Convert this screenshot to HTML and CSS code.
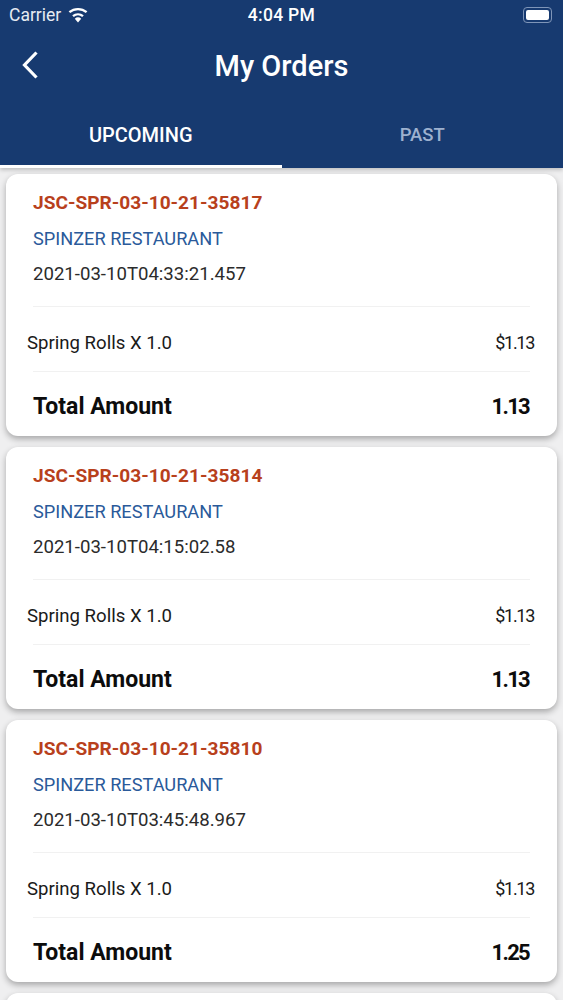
FILE: index.html
```html
<!DOCTYPE html>
<html lang="en">
<head>
    <meta charset="UTF-8">
    <meta name="viewport" content="width=device-width, initial-scale=1.0">
    <title>My Orders</title>
    <link rel="stylesheet" href="styles.css">
</head>
<body>

    <div class="header">
        <div class="status-bar">
            <div class="status-left">
                <span>Carrier</span>
                <svg class="wifi" width="20" height="16" viewBox="0 0 20 16">
                    <path d="M10 15.5l-3.2-3.7a4.8 4.8 0 0 1 6.4 0z" fill="#fff"/>
                    <path d="M5 9.2a7.8 7.8 0 0 1 10 0" fill="none" stroke="#fff" stroke-width="2.4"/>
                    <path d="M1.4 5.2a13.4 13.4 0 0 1 17.2 0" fill="none" stroke="#fff" stroke-width="2.4"/>
                </svg>
            </div>
            <div class="status-time">4:04 PM</div>
            <div class="battery"><div class="battery-fill"></div></div>
        </div>

        <div class="title-bar">
            <svg class="back" width="18" height="28" viewBox="0 0 18 28">
                <path d="M15.5 1.5L3.5 14l12 12.5" fill="none" stroke="#fff" stroke-width="3.2"/>
            </svg>
            <div class="title">My Orders</div>
        </div>

        <div class="tabs">
            <div class="tab active">UPCOMING</div>
            <div class="tab">PAST</div>
        </div>
    </div>

    <div class="orders">
        <div class="card">
            <div class="order-id">JSC-SPR-03-10-21-35817</div>
            <div class="restaurant">SPINZER RESTAURANT</div>
            <div class="date">2021-03-10T04:33:21.457</div>
            <div class="item-row"><span>Spring Rolls X 1.0</span><span class="price">$1.13</span></div>
            <div class="total-row"><span>Total Amount</span><span class="total">1.13</span></div>
        </div>

        <div class="card">
            <div class="order-id">JSC-SPR-03-10-21-35814</div>
            <div class="restaurant">SPINZER RESTAURANT</div>
            <div class="date">2021-03-10T04:15:02.58</div>
            <div class="item-row"><span>Spring Rolls X 1.0</span><span class="price">$1.13</span></div>
            <div class="total-row"><span>Total Amount</span><span class="total">1.13</span></div>
        </div>

        <div class="card">
            <div class="order-id">JSC-SPR-03-10-21-35810</div>
            <div class="restaurant">SPINZER RESTAURANT</div>
            <div class="date">2021-03-10T03:45:48.967</div>
            <div class="item-row"><span>Spring Rolls X 1.0</span><span class="price">$1.13</span></div>
            <div class="total-row"><span>Total Amount</span><span class="total">1.25</span></div>
        </div>

        <div class="card card-cut"></div>
    </div>

</body>
</html>
```

FILE: styles.css
```css
html, body {
    height: 1000px;
    overflow: hidden;
}

body {
    margin: 0;
    background-color: #efeff0;
    font-family: 'Roboto', 'Liberation Sans', sans-serif;
}

.header {
    background-color: #173a70;
    height: 168px;
    color: #fff;
    display: flex;
    flex-direction: column;
    box-shadow: 0 2px 4px rgba(0, 0, 0, 0.2);
}

.status-bar {
    height: 29px;
    display: flex;
    align-items: center;
    justify-content: space-between;
    position: relative;
    padding: 0 11px 0 9px;
    font-size: 17.5px;
}

.status-left {
    display: flex;
    align-items: center;
    gap: 7px;
    color: #e6ebf2;
}

.status-time {
    position: absolute;
    left: 0;
    right: 0;
    text-align: center;
    font-weight: 500;
    letter-spacing: 0.3px;
}

.battery {
    width: 29px;
    height: 16px;
    box-sizing: border-box;
    border: 1px solid #7f95b8;
    border-radius: 4px;
    padding: 2px;
}

.battery-fill {
    height: 100%;
    background-color: #fff;
    border-radius: 2px;
}

.title-bar {
    height: 73px;
    display: flex;
    align-items: center;
    justify-content: center;
    position: relative;
}

.back {
    position: absolute;
    left: 21px;
    top: 22px;
}

.title {
    font-size: 29px;
    font-weight: 500;
}

.tabs {
    flex: 1;
    display: flex;
}

.tab {
    width: 50%;
    box-sizing: border-box;
    padding-top: 22px;
    text-align: center;
    font-size: 18.5px;
    font-weight: 500;
    color: #9db1cf;
}

.tab.active {
    color: #fff;
    font-size: 20px;
    padding-top: 21px;
    border-bottom: 3px solid #fff;
}

.orders {
    padding: 6px 6px 0;
    display: flex;
    flex-direction: column;
    gap: 11px;
}

.card {
    height: 262px;
    flex-shrink: 0;
    box-sizing: border-box;
    padding: 18px 27px 0;
    background-color: #fff;
    border-radius: 12px;
    box-shadow: 0 3px 6px rgba(0, 0, 0, 0.3);
}

.card-cut {
    height: 7px;
    border-radius: 12px 12px 0 0;
}

.order-id {
    font-size: 19.1px;
    font-weight: 700;
    line-height: 22px;
    color: #b8401c;
}

.restaurant {
    margin-top: 14px;
    font-size: 18.2px;
    line-height: 22px;
    color: #2a5a9a;
}

.date {
    margin-top: 13px;
    padding-bottom: 21px;
    font-size: 18.6px;
    line-height: 22px;
    color: #2b2b2b;
    border-bottom: 1px solid #f1f1f1;
}

.item-row {
    display: flex;
    justify-content: space-between;
    align-items: center;
    height: 64px;
    padding-top: 7px;
    box-sizing: border-box;
    margin: 0 -5px 0 -6px;
    font-size: 18.6px;
    color: #1a1a1a;
}

.price {
    font-size: 18px;
    letter-spacing: -1.3px;
    margin-right: 1px;
}

.total-row {
    display: flex;
    justify-content: space-between;
    align-items: center;
    height: 66px;
    padding-top: 3px;
    box-sizing: border-box;
    border-top: 1px solid #f1f1f1;
    font-size: 23px;
    font-weight: 700;
    color: #0c0c0c;
}

.total {
    font-size: 22px;
    letter-spacing: -1.7px;
    margin-right: 1px;
}
```
